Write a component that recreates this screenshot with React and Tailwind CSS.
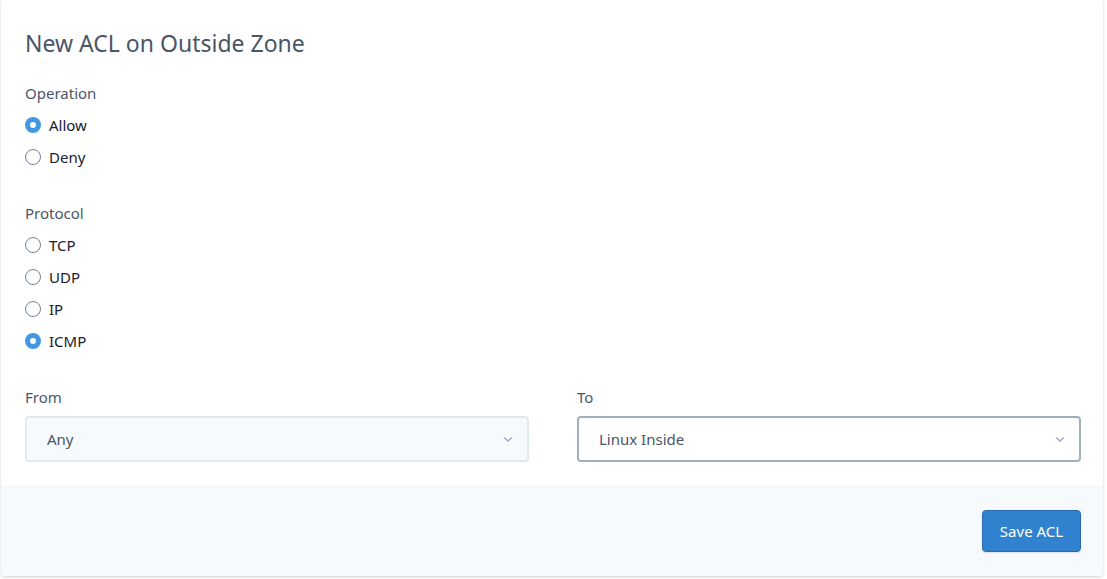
import React, { useState } from "react";

const Radio = ({ label, checked, onChange }) => (
  <label className="flex items-center h-8 cursor-pointer" onClick={onChange}>
    {checked ? (
      <span className="w-4 h-4 rounded-full bg-[#4299e1] flex items-center justify-center">
        <span className="w-[6px] h-[6px] rounded-full bg-white" />
      </span>
    ) : (
      <span className="w-4 h-4 rounded-full border border-[#718096] bg-white" />
    )}
    <span className="ml-2 text-[15px] text-[#1a202c]">{label}</span>
  </label>
);

const Chevron = () => (
  <svg width="10" height="7" viewBox="0 0 10 7" fill="none" className="text-[#a0aec0]">
    <path d="M1 1.5 L5 5 L9 1.5" stroke="currentColor" strokeWidth="1.6" />
  </svg>
);

const Select = ({ value, active }) => (
  <div
    className={
      active
        ? "h-[46px] rounded border-2 border-[#a0aec0] bg-white flex items-center justify-between pl-5 pr-[14px]"
        : "h-[46px] rounded border-2 border-[#e2e8f0] bg-[#f7fafc] flex items-center justify-between pl-5 pr-[14px]"
    }
  >
    <span className="text-[15px] text-[#4a5568]">{value}</span>
    <Chevron />
  </div>
);

export default function App() {
  const [operation, setOperation] = useState("Allow");
  const [protocol, setProtocol] = useState("ICMP");

  return (
    <div className="bg-white pl-px pr-[4px] pb-[4px] font-['Noto_Sans',sans-serif]">
      <div className="bg-white rounded-b shadow-[0_1px_3px_rgba(0,0,0,0.18)]">
        <div className="pl-6 pr-[22px] pt-[27px] pb-[23px]">
          <h1 className="text-[23px] leading-8 text-[#4a5568]">New ACL on Outside Zone</h1>

          <div className="mt-[23px] text-[15px] leading-[22px] text-[#4a5568]">Operation</div>
          <div className="mt-[5px]">
            {["Allow", "Deny"].map((o) => (
              <Radio key={o} label={o} checked={operation === o} onChange={() => setOperation(o)} />
            ))}
          </div>

          <div className="mt-[29px] text-[15px] leading-[22px] text-[#4a5568]">Protocol</div>
          <div className="mt-[5px]">
            {["TCP", "UDP", "IP", "ICMP"].map((p) => (
              <Radio key={p} label={p} checked={protocol === p} onChange={() => setProtocol(p)} />
            ))}
          </div>

          <div className="mt-[29px] grid grid-cols-2 gap-x-12">
            <div>
              <div className="text-[15px] leading-[22px] text-[#4a5568]">From</div>
              <div className="mt-2">
                <Select value="Any" />
              </div>
            </div>
            <div>
              <div className="text-[15px] leading-[22px] text-[#4a5568]">To</div>
              <div className="mt-2">
                <Select value="Linux Inside" active />
              </div>
            </div>
          </div>
        </div>

        <div className="bg-[#f7fafc] rounded-b flex justify-end pr-[22px] pt-[25px] pb-[24px]">
          <button className="h-[42px] w-[99px] rounded bg-[#3182ce] border border-[#2b6cb0] text-white text-[15px] shadow-[0_1px_2px_rgba(0,0,0,0.12)]">
            Save ACL
          </button>
        </div>
      </div>
    </div>
  );
}
